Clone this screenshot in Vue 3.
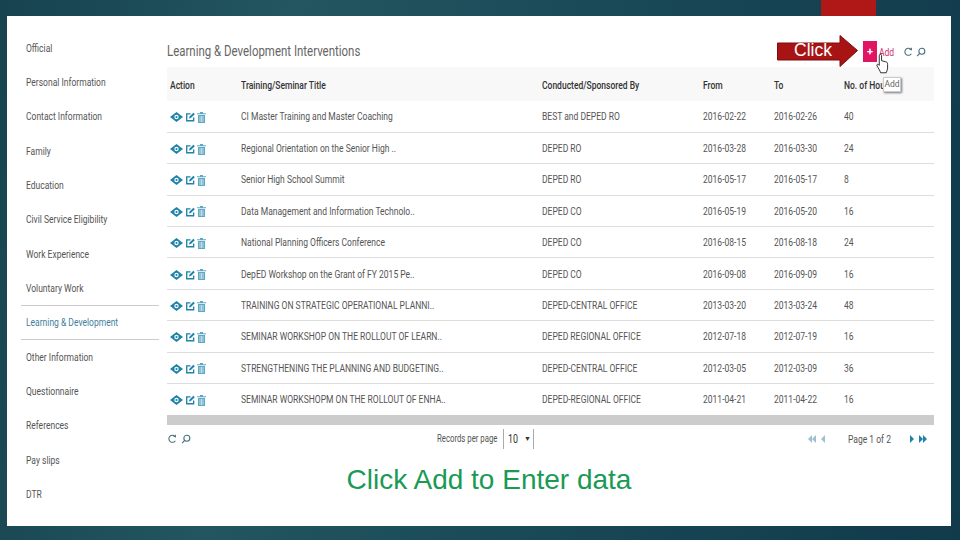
<template>
  <div class="page">
    <div class="top-strip"><div class="red-tab"></div></div>
    <div class="panel">
      <aside class="sidebar">
        <a v-for="item in menu" :key="item" class="menu-item" :class="{ active: item === activeItem }"><span class="sq">{{ item }}</span></a>
      </aside>

      <main class="content">
        <div class="title-row">
          <h1><span class="sq-title">Learning &amp; Development Interventions</span></h1>
          <div class="tools">
            <button class="add-btn">+</button>
            <span class="add-label"><span class="sq">Add</span></span>
            <svg class="tool-icon" viewBox="0 0 12 12"><path d="M9.600 3A4.200 4.200 0 1 0 10 8" /><path d="M7.800 2.600 10 3.400 10 1" /></svg>
            <svg class="tool-icon" viewBox="0 0 12 12"><circle cx="7" cy="5" r="3.600" /><path d="M4.400 7.600 1.400 11" /></svg>
          </div>
        </div>

        <table>
          <colgroup>
            <col class="c-action"><col class="c-title"><col class="c-by"><col class="c-date"><col class="c-date"><col>
          </colgroup>
          <thead>
            <tr>
              <th v-for="head in heads" :key="head"><span class="sq">{{ head }}</span></th>
            </tr>
          </thead>
          <tbody>
            <tr v-for="row in rows" :key="row.title">
              <td class="actions">
                <svg class="eye" viewBox="0 0 13 10"><path d="M0 5 6.500 0 13 5 6.500 10Z" /><circle cx="6.500" cy="5" r="2.200" fill="#fff" /><circle cx="6.500" cy="5" r="1.100" /></svg>
                <svg class="act" viewBox="0 0 10 10"><path class="line" d="M8.500 5.500V9.200H.8V1.500H5" /><path d="M3.300 6.800 3.800 4.600 8.200.4 9.800 2 5.400 6.200Z" /></svg>
                <svg class="act trash" viewBox="0 0 9 11"><path d="M0 1.200H3V0H6V1.200H9V2.200H0Z" /><path d="M1 3H8V11H1Z" /><path d="M3 4V10M4.500 4V10M6 4V10" stroke="#fff" stroke-width=".6" /></svg>
              </td>
              <td><span class="sq">{{ row.title }}</span></td>
              <td><span class="sq">{{ row.by }}</span></td>
              <td><span class="sq">{{ row.from }}</span></td>
              <td><span class="sq">{{ row.to }}</span></td>
              <td><span class="sq">{{ row.hours }}</span></td>
            </tr>
          </tbody>
        </table>

        <div class="scroll-bar"></div>

        <div class="table-footer">
          <div class="foot-tools">
            <svg class="tool-icon" viewBox="0 0 12 12"><path d="M9.600 3A4.200 4.200 0 1 0 10 8" /><path d="M7.800 2.600 10 3.400 10 1" /></svg>
            <svg class="tool-icon" viewBox="0 0 12 12"><circle cx="7" cy="5" r="3.600" /><path d="M4.400 7.600 1.400 11" /></svg>
          </div>
          <div class="per-page">
            <span class="per-label"><span class="sq">Records per page</span></span>
            <span class="select"><span class="sq">10</span><i>▼</i></span>
          </div>
          <div class="pager">
            <svg class="page-icon faded" viewBox="0 0 8 8"><path d="M4 0V8L0 4ZM8 0V8L4 4Z" /></svg>
            <svg class="page-icon faded small" viewBox="0 0 4 8"><path d="M4 0V8L0 4Z" /></svg>
            <span class="page-text"><span class="sq">Page 1 of 2</span></span>
            <svg class="page-icon small" viewBox="0 0 4 8"><path d="M0 0V8L4 4Z" /></svg>
            <svg class="page-icon" viewBox="0 0 8 8"><path d="M0 0V8L4 4ZM4 0V8L8 4Z" /></svg>
          </div>
        </div>

        <p class="caption">Click Add to Enter data</p>
      </main>

      <!-- slide annotations drawn on top of the screenshot -->
      <div class="click-arrow">
        <svg viewBox="0 0 81 32" width="81" height="32"><path d="M.5 8H63V.5L80.500 15.500 63 31.500V25H.5Z" fill="#a81414" stroke="#7c0d0d" /></svg>
        <span>Click</span>
      </div>
      <svg class="hand" viewBox="0 0 14 22" width="13" height="21"><path d="M4 1.500C5 .5 6 1 6 2.500V8L10 9C12 9.500 12.500 10 12.500 12V16C12.500 18 11.500 19 11 21H5C4.500 19 2.500 16 1 13.500 .5 12 2 11 3.500 13V3C3.500 2.500 3.700 2 4 1.500Z" fill="#fff" stroke="#222" stroke-width="1" /></svg>
      <div class="tooltip">Add</div>
    </div>
  </div>
</template>

<script setup>
const activeItem = 'Learning & Development'

const menu = [
  'Official',
  'Personal Information',
  'Contact Information',
  'Family',
  'Education',
  'Civil Service Eligibility',
  'Work Experience',
  'Voluntary Work',
  'Learning & Development',
  'Other Information',
  'Questionnaire',
  'References',
  'Pay slips',
  'DTR',
]

const heads = ['Action', 'Training/Seminar Title', 'Conducted/Sponsored By', 'From', 'To', 'No. of Hours']

const rows = [
  { title: 'CI Master Training and Master Coaching', by: 'BEST and DEPED RO', from: '2016-02-22', to: '2016-02-26', hours: 40 },
  { title: 'Regional Orientation on the Senior High ..', by: 'DEPED RO', from: '2016-03-28', to: '2016-03-30', hours: 24 },
  { title: 'Senior High School Summit', by: 'DEPED RO', from: '2016-05-17', to: '2016-05-17', hours: 8 },
  { title: 'Data Management and Information Technolo..', by: 'DEPED CO', from: '2016-05-19', to: '2016-05-20', hours: 16 },
  { title: 'National Planning Officers Conference', by: 'DEPED CO', from: '2016-08-15', to: '2016-08-18', hours: 24 },
  { title: 'DepED Workshop on the Grant of FY 2015 Pe..', by: 'DEPED CO', from: '2016-09-08', to: '2016-09-09', hours: 16 },
  { title: 'TRAINING ON STRATEGIC OPERATIONAL PLANNI..', by: 'DEPED-CENTRAL OFFICE', from: '2013-03-20', to: '2013-03-24', hours: 48 },
  { title: 'SEMINAR WORKSHOP ON THE ROLLOUT OF LEARN..', by: 'DEPED REGIONAL OFFICE', from: '2012-07-18', to: '2012-07-19', hours: 16 },
  { title: 'STRENGTHENING THE PLANNING AND BUDGETING..', by: 'DEPED-CENTRAL OFFICE', from: '2012-03-05', to: '2012-03-09', hours: 36 },
  { title: 'SEMINAR WORKSHOPM ON THE ROLLOUT OF ENHA..', by: 'DEPED-REGIONAL OFFICE', from: '2011-04-21', to: '2011-04-22', hours: 16 },
]
</script>

<style>
html,
body {
  margin: 0;
  background: #163f4e;
}
</style>

<style scoped>
.page {
  width: 960px;
  height: 540px;
  box-sizing: border-box;
  padding-left: 7px;
  padding-right: 9px;
  overflow: hidden;
  background: linear-gradient(100deg, #16434f 0%, #235660 28%, #194857 60%, #113a4b 100%);
  font-family: Roboto, "Liberation Sans", sans-serif;
  color: #444;
}

/* the source screenshot was squeezed sideways, so the text is too */
.sq,
.sq-title {
  display: inline-block;
  white-space: nowrap;
  transform-origin: left center;
  transform: scaleX(0.74);
}

.sq-title {
  transform: scaleX(0.79);
}

.top-strip {
  height: 16px;
  padding-left: 814px;
}

.red-tab {
  width: 55px;
  height: 16px;
  background: #b01717;
}

.panel {
  position: relative;
  display: flex;
  height: 510px;
  background: #fff;
}

.sidebar {
  width: 160px;
  flex: none;
  display: flex;
  flex-direction: column;
  padding-top: 14.6px;
}

.menu-item {
  height: 34.35px;
  flex: none;
  box-sizing: border-box;
  margin-left: 14px;
  margin-right: 8px;
  padding-left: 5px;
  line-height: 34.35px;
  font-size: 11.5px;
  color: #555;
  white-space: nowrap;
}

.menu-item.active {
  border-top: 1px solid #ccc;
  border-bottom: 1px solid #ccc;
  line-height: 32.35px;
  color: #3f7f9c;
}

.content {
  flex: 1;
  min-width: 0;
  padding-right: 17px;
}

.title-row {
  height: 51px;
  display: flex;
  align-items: flex-start;
  justify-content: space-between;
}

h1 {
  margin: 27px 0 0;
  font-size: 14.5px;
  font-weight: 400;
  line-height: 17px;
  color: #666;
}

.tools {
  display: flex;
  align-items: center;
  margin-top: 25px;
  margin-right: 5px;
  height: 21px;
}

.add-btn {
  width: 14px;
  height: 21px;
  padding: 0;
  border: 0;
  background: #e01563;
  color: #fff;
  font: 700 11px Roboto, sans-serif;
}

.add-label {
  width: 16px;
  margin-left: 2px;
  margin-right: 8px;
  font-size: 11.5px;
  color: #d0306f;
}

.tool-icon {
  width: 10px;
  height: 10px;
  margin-right: 3px;
  fill: none;
  stroke: #46707c;
  stroke-width: 1.3;
}

table {
  width: 767px;
  table-layout: fixed;
  border-collapse: collapse;
  font-size: 11.5px;
}

.c-action { width: 71px; }
.c-title { width: 301px; }
.c-by { width: 161px; }
.c-date { width: 70.5px; }

th {
  height: 34px;
  padding: 2px 0 0 3px;
  box-sizing: border-box;
  background: #f8f8f8;
  text-align: left;
  font-weight: 500;
  color: #333;
  white-space: nowrap;
}

td {
  height: 31.4px;
  box-sizing: border-box;
  padding: 0 0 0 3px;
  border-bottom: 1px solid #ddd;
  color: #555;
  white-space: nowrap;
}

tbody tr:last-child td {
  border-bottom: 0;
}

.actions svg {
  vertical-align: middle;
  fill: #1f83a8;
}

.eye {
  width: 13px;
  height: 10px;
  margin-right: 3px;
}

.act {
  width: 9px;
  height: 10px;
  margin-right: 2px;
}

.actions .trash {
  height: 11px;
  fill: #5fa8c4;
}

.line {
  fill: none;
  stroke: #1f83a8;
  stroke-width: 1.5;
}

.scroll-bar {
  width: 767px;
  height: 10px;
  background: #ccc;
}

.table-footer {
  width: 767px;
  height: 26px;
  margin-top: 1px;
  display: grid;
  grid-template-columns: 270px 200px 1fr;
  align-items: center;
}

.foot-tools {
  display: flex;
  gap: 1px;
}

.per-page {
  display: flex;
  align-items: center;
  font-size: 10.5px;
  color: #555;
}

.per-label {
  width: 62px;
  white-space: nowrap;
}

.select {
  width: 31px;
  height: 20px;
  box-sizing: border-box;
  margin-left: 4px;
  padding: 0 2px 0 4px;
  border-left: 1px solid #aaa;
  border-right: 1px solid #aaa;
  display: flex;
  align-items: center;
  justify-content: space-between;
  font-size: 12px;
  color: #333;
}

.select i {
  font-style: normal;
  font-size: 7px;
}

.pager {
  display: flex;
  align-items: center;
  justify-content: flex-end;
  padding-right: 7px;
  font-size: 11.5px;
}

.page-text {
  width: 42px;
  margin: 0 15px 0 18px;
  color: #555;
  white-space: nowrap;
}

.page-icon {
  width: 8px;
  height: 8px;
  fill: #1f83a8;
}

.page-icon.small {
  width: 4px;
  margin: 0 5px;
}

.page-icon.faded {
  fill: #9cc2d0;
}

.caption {
  width: 644px;
  margin: 12px 0 0;
  text-align: center;
  font-family: "Liberation Sans", Arial, sans-serif;
  font-size: 28px;
  line-height: 32px;
  color: #1a9a55;
}

.click-arrow {
  position: absolute;
  left: 770px;
  top: 19px;
  width: 81px;
  height: 32px;
}

.click-arrow svg {
  display: block;
}

.click-arrow span {
  position: absolute;
  left: 17px;
  top: 5px;
  font-family: "Liberation Sans", Arial, sans-serif;
  font-size: 17.5px;
  line-height: 20px;
  color: #fff;
}

.hand {
  position: absolute;
  left: 869px;
  top: 37px;
}

.tooltip {
  position: absolute;
  left: 876px;
  top: 61px;
  width: 18px;
  height: 15px;
  background: #fff;
  border: 1px solid #ccc;
  box-shadow: 1px 1px 2px #777;
  box-sizing: border-box;
  text-align: center;
  font-size: 8.5px;
  line-height: 13px;
  color: #666;
}
</style>
